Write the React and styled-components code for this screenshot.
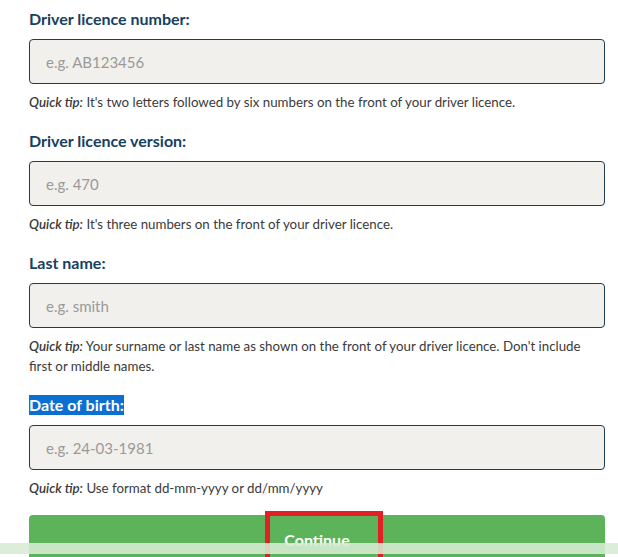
import React from "react";
import styled, { createGlobalStyle } from "styled-components";

const GlobalStyle = createGlobalStyle`
  html, body { margin: 0; padding: 0; background: #ffffff; }
  body { font-family: Lato, "Noto Sans", sans-serif; color: #333333; }
  * { box-sizing: border-box; }
`;

const Page = styled.main`
  position: relative;
  height: 557px;
  overflow: hidden;
  padding: 9px 13px 0 29px;
`;

const Form = styled.form`
  display: flex;
  flex-direction: column;
  gap: 19px;
`;

const Field = styled.div`
  display: flex;
  flex-direction: column;
`;

const Label = styled.label`
  display: block;
  font-size: 16px;
  line-height: 20px;
  font-weight: 700;
  color: #17415f;
  margin-bottom: 10px;
`;

const Highlight = styled.span`
  background: #0a6fd0;
  color: #ffffff;
  padding: 0 0 1px;
`;

const Input = styled.input`
  display: block;
  width: 100%;
  height: 45px;
  border: 1px solid #1d3d54;
  border-radius: 4px;
  background: #f1f0ec;
  padding: 0 16px;
  font-family: inherit;
  font-size: 15px;
  color: #333;
  outline: none;
  &::placeholder { color: #9a9a98; }
`;

const Tip = styled.p`
  margin: 8px 0 0;
  font-size: 13.3px;
  line-height: 20px;
  color: #3a3a3a;
`;

const TipLead = styled.em`
  font-style: italic;
  font-weight: 600;
`;

const Button = styled.button`
  position: relative;
  display: block;
  width: 100%;
  height: 48px;
  margin-top: -2px;
  border: none;
  border-radius: 4px;
  background: #5cb35a;
  color: #ffffff;
  font-family: inherit;
  font-size: 16px;
  font-weight: 700;
  padding: 0;
`;

const Annotation = styled.span`
  position: absolute;
  left: 236px;
  top: -4px;
  width: 118px;
  height: 52px;
  border: 5px solid #e21f26;
  pointer-events: none;
`;

const BottomStrip = styled.div`
  position: absolute;
  left: 0;
  right: 0;
  top: 543px;
  height: 11px;
  background: rgba(215, 236, 212, 0.88);
`;

const fields = [
  { id: "num", label: "Driver licence number:", placeholder: "e.g. AB123456", tip: "It's two letters followed by six numbers on the front of your driver licence." },
  { id: "ver", label: "Driver licence version:", placeholder: "e.g. 470", tip: "It's three numbers on the front of your driver licence." },
  { id: "last", label: "Last name:", placeholder: "e.g. smith", tip: "Your surname or last name as shown on the front of your driver licence. Don't include first or middle names." },
  { id: "dob", label: "Date of birth:", placeholder: "e.g. 24-03-1981", tip: "Use format dd-mm-yyyy or dd/mm/yyyy", selected: true },
];

export default function App() {
  return (
    <>
      <GlobalStyle />
      <Page>
        <Form onSubmit={(e) => e.preventDefault()}>
          {fields.map((f) => (
            <Field key={f.id}>
              <Label htmlFor={f.id}>
                {f.selected ? <Highlight>{f.label}</Highlight> : f.label}
              </Label>
              <Input id={f.id} placeholder={f.placeholder} />
              <Tip>
                <TipLead>Quick tip:</TipLead> {f.tip}
              </Tip>
            </Field>
          ))}
          <Button type="submit">
            Continue
            <Annotation />
          </Button>
        </Form>
        <BottomStrip />
      </Page>
    </>
  );
}
